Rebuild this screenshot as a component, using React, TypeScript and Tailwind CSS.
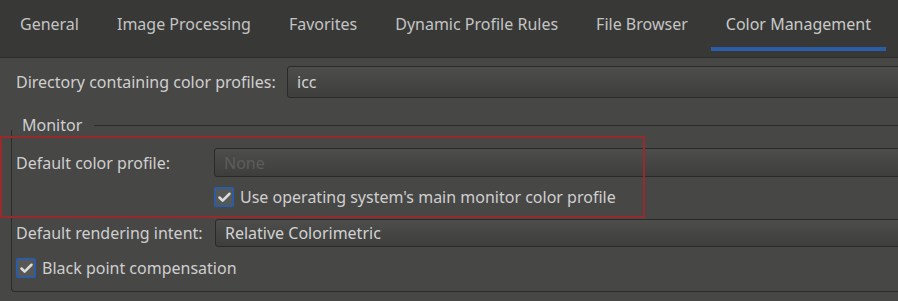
import { Check } from 'lucide-react';

const tabs = ['General', 'Image Processing', 'Favorites', 'Dynamic Profile Rules', 'File Browser', 'Color Management'];

function CheckBox({ label }: { label: string }) {
  return (
    <div className="flex h-[20px] items-center gap-[6px]">
      <div className="flex h-[20px] w-[20px] items-center justify-center rounded-[2px] border-2 border-[#2b5da6] bg-[#575856]">
        <Check size={15} strokeWidth={4} className="text-[#dcdcdc]" />
      </div>
      <span>{label}</span>
    </div>
  );
}

function Combo({ value, dim }: { value: string; dim?: boolean }) {
  return (
    <div
      className={
        'flex h-full flex-1 items-center rounded-[3px] border border-[#2a2b29] bg-gradient-to-b from-[#4d4e4c] to-[#3e3f3d] pl-[9px] -mr-4 ' +
        (dim ? 'text-[#5c5d5b]' : 'text-[#d2d2d2]')
      }
    >
      {value}
    </div>
  );
}

export default function App() {
  return (
    <div
      className="relative h-[301px] w-[898px] overflow-hidden bg-[#474746] text-[16px] text-[#cfcfcf]"
      style={{ fontFamily: '"Noto Sans", "Open Sans", sans-serif' }}
    >
      {/* Tab bar */}
      <div className="flex h-[58px] items-start gap-[8px] border-b border-[#2c2d2b] bg-[#383937] pl-[5px]">
        {tabs.map((t) => {
          const active = t === 'Color Management';
          return (
            <div
              key={t}
              className={
                'h-[51px] px-[15px] pt-[12px] ' +
                (active ? 'border-b-4 border-[#2b5da6]' : '')
              }
            >
              <span className={active ? 'text-[#c9c9c9]' : 'text-[#c4c4c4]'}>{t}</span>
            </div>
          );
        })}
      </div>

      {/* Directory row */}
      <div className="flex h-[32px] items-center pl-[16px] mt-[8px]">
        <span className="w-[271px] shrink-0">Directory containing color profiles:</span>
        <Combo value="icc" />
      </div>

      {/* Monitor group */}
      <div className="mt-[17px]">
        <div className="flex h-[20px] items-center">
          <span className="pl-[22px]">Monitor</span>
          <div className="ml-[12px] h-px flex-1 bg-[#2c2d2b]" />
        </div>
        <div className="-mt-[5px] ml-[11px] -mr-4 rounded-bl-[4px] border-b border-l border-[#2c2d2b] pl-[4px] pt-[18px] pb-[13px]">
          <div className="flex h-[29px] items-center">
            <span className="w-[198px] shrink-0">Default color profile:</span>
            <Combo value="None" dim />
          </div>
          <div className="mt-[10px] pl-[198px]">
            <CheckBox label="Use operating system's main monitor color profile" />
          </div>
          <div className="mt-[12px] flex h-[28px] items-center">
            <span className="w-[199px] shrink-0">Default rendering intent:</span>
            <Combo value="Relative Colorimetric" />
          </div>
          <div className="mt-[11px]">
            <CheckBox label="Black point compensation" />
          </div>
        </div>
      </div>

      {/* Highlight annotation */}
      <div className="pointer-events-none absolute left-0 top-[136px] h-[82px] w-[645px] border-2 border-[#962a2c]" />
    </div>
  );
}
